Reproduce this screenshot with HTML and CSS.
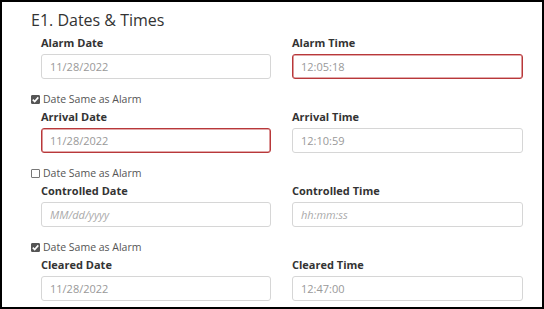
FILE: index.html
```html
<!DOCTYPE html>
<html>
<head>
  <title>Dates &amp; Times</title>
  <link rel="stylesheet" href="styles.css">
</head>
<body>
  <div class="frame">
    <h2 class="section-title">E1. Dates &amp; Times</h2>

    <div class="fields">
      <div class="field">
        <label class="field-label">Alarm Date</label>
        <div class="input">11/28/2022</div>
      </div>
      <div class="field">
        <label class="field-label">Alarm Time</label>
        <div class="input invalid">12:05:18</div>
      </div>

      <div class="field">
        <div class="same-as">
          <span class="box checked"><svg width="9" height="9" viewBox="0 0 9 9"><path d="M1.8 4.6 L3.7 6.5 L7.3 2.4" fill="none" stroke="#fff" stroke-width="1.6"/></svg></span>
          Date Same as Alarm
        </div>
        <label class="field-label">Arrival Date</label>
        <div class="input invalid">11/28/2022</div>
      </div>
      <div class="field">
        <label class="field-label">Arrival Time</label>
        <div class="input">12:10:59</div>
      </div>

      <div class="field">
        <div class="same-as">
          <span class="box"></span>
          Date Same as Alarm
        </div>
        <label class="field-label">Controlled Date</label>
        <div class="input empty">MM/dd/yyyy</div>
      </div>
      <div class="field">
        <label class="field-label">Controlled Time</label>
        <div class="input empty">hh:mm:ss</div>
      </div>

      <div class="field">
        <div class="same-as">
          <span class="box checked"><svg width="9" height="9" viewBox="0 0 9 9"><path d="M1.8 4.6 L3.7 6.5 L7.3 2.4" fill="none" stroke="#fff" stroke-width="1.6"/></svg></span>
          Date Same as Alarm
        </div>
        <label class="field-label">Cleared Date</label>
        <div class="input">11/28/2022</div>
      </div>
      <div class="field">
        <label class="field-label">Cleared Time</label>
        <div class="input">12:47:00</div>
      </div>
    </div>
  </div>
</body>
</html>
```

FILE: styles.css
```css
body {
  margin: 0;
  font-family: "Open Sans", Arial, sans-serif;
  background: #fff;
}
.frame {
  width: 544px;
  height: 309px;
  box-sizing: border-box;
  border: 2px solid #000;
  padding: 7px 0 0 29px;
  overflow: hidden;
}
.section-title {
  margin: 0 0 4px;
  font-size: 16px;
  line-height: 22px;
  font-weight: 400;
  color: #333;
}
.fields {
  display: grid;
  grid-template-columns: 240px 231px;
  column-gap: 21px;
  row-gap: 11px;
  align-items: end;
}
.field {
  display: flex;
  flex-direction: column;
}
.field-label {
  display: block;
  font-size: 11px;
  line-height: 16px;
  font-weight: 700;
  color: #333;
  margin-bottom: 3px;
}
.fields .field:nth-child(odd) .field-label,
.fields .field:nth-child(odd) .input {
  margin-left: 10px;
}
.input {
  height: 25px;
  box-sizing: border-box;
  border: 1px solid #d6d6d6;
  border-radius: 3px;
  padding: 0 8px;
  font-size: 11px;
  line-height: 23px;
  color: #999;
}
.input.invalid {
  border-color: #b8383a;
  box-shadow: inset 0 0 0 0.6px #c65557;
}
.input.empty {
  font-style: italic;
  color: #aaa;
}
.same-as {
  display: flex;
  align-items: center;
  gap: 3px;
  height: 18px;
  margin-bottom: 1px;
  font-size: 10.5px;
  color: #555;
}
.box {
  width: 9px;
  height: 9px;
  box-sizing: border-box;
  border: 1px solid #777;
  border-radius: 1px;
  background: #fff;
  display: inline-flex;
}
.box.checked {
  background: #555;
  border-color: #555;
}
.box svg {
  margin: -1px;
}
```
